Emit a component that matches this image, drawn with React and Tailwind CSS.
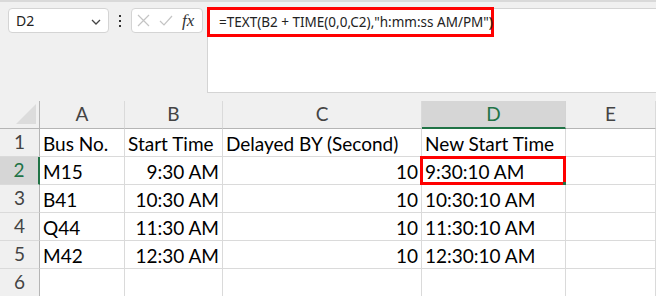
import React from 'react';

// Feuille Excel : barre de formule + grille
const cols = [
  { key: 'A', w: 'w-[85px]' },
  { key: 'B', w: 'w-[98px]' },
  { key: 'C', w: 'w-[199px]' },
  { key: 'D', w: 'w-[144px]' },
  { key: 'E', w: 'flex-1' },
];

const rows = [
  ['Bus No.', 'Start Time', 'Delayed BY (Second)', 'New Start Time', ''],
  ['M15', '9:30 AM', '10', '9:30:10 AM', ''],
  ['B41', '10:30 AM', '10', '10:30:10 AM', ''],
  ['Q44', '11:30 AM', '10', '11:30:10 AM', ''],
  ['M42', '12:30 AM', '10', '12:30:10 AM', ''],
  ['', '', '', '', ''],
];

const cellFont = { fontFamily: 'Lato, "Open Sans", sans-serif' };
const uiFont = { fontFamily: '"Noto Sans", "Open Sans", sans-serif' };

const Cell = ({ value, col, rowIdx }) => {
  const rightAlign = rowIdx > 0 && (col === 'B' || col === 'C');
  const selected = rowIdx === 1 && col === 'D';
  const w = cols.find(c => c.key === col).w;
  return (
    <div
      className={`relative ${w} shrink-0 h-[28px] border-r border-b border-[#dadada] bg-white flex items-center px-[3px] text-[19px] text-black ${rightAlign ? 'justify-end' : ''}`}
      style={cellFont}
    >
      <span className="whitespace-nowrap leading-none pt-[1px]">{value}</span>
      {selected && (
        <>
          <div className="absolute -left-[2px] -top-[1px] -right-[1px] -bottom-[1px] border-[3px] border-[#ff0000] pointer-events-none" />
          <div className="absolute -right-[2px] -bottom-[2px] w-[4px] h-[4px] bg-[#217346]" />
        </>
      )}
    </div>
  );
};

export default function App() {
  return (
    <div className="w-[656px] h-[296px] overflow-hidden bg-[#f0f0f0] relative">
      <div className="h-[2px] bg-[#d9d9d9]" />

      {/* Barre de formule */}
      <div className="flex items-start pt-[6px] pl-[8px]">
        <div className="w-[101px] h-[25px] bg-white border border-[#d4d4d4] rounded-[4px] flex items-center justify-between pl-[7px] pr-[6px]">
          <span className="text-[14px] text-[#222]" style={uiFont}>D2</span>
          <svg width="12" height="8" viewBox="0 0 12 8" className="mt-[2px]">
            <path d="M2 2 L6 6 L10 2" fill="none" stroke="#444" strokeWidth="1.3" />
          </svg>
        </div>
        <div className="w-[22px] h-[25px] flex flex-col items-center justify-center gap-[3px]">
          <div className="w-[2px] h-[2px] bg-[#333]" />
          <div className="w-[2px] h-[2px] bg-[#333]" />
          <div className="w-[2px] h-[2px] bg-[#333]" />
        </div>
        <div className="w-[72px] h-[25px] bg-white border border-[#d4d4d4] rounded-[4px] flex items-center pl-[5px] gap-[9px]">
          <svg width="13" height="13" viewBox="0 0 13 13">
            <path d="M1 1 L12 12 M12 1 L1 12" stroke="#c4c4c4" strokeWidth="1.2" />
          </svg>
          <svg width="14" height="12" viewBox="0 0 14 12">
            <path d="M1 6 L5 10 L13 1" fill="none" stroke="#c4c4c4" strokeWidth="1.2" />
          </svg>
          <span className="text-[17px] italic text-[#333] leading-none" style={{ fontFamily: '"Liberation Serif", serif' }}>fx</span>
        </div>
        <div className="ml-[4px] flex-1 h-[85px] bg-white border border-[#d4d4d4] border-r-0">
          <div className="-mt-[2px] -ml-px w-[287px] h-[30px] border-[3px] border-[#ff0000] flex items-center pl-[9px]">
            <span className="text-[13.5px] text-[#222] whitespace-nowrap" style={uiFont}>
              =TEXT(B2 + TIME(0,0,C2),"h:mm:ss AM/PM")
            </span>
          </div>
        </div>
      </div>

      {/* Grille */}
      <div className="mt-[8px]">
        <div className="flex h-[28px]">
          <div className="w-[40px] shrink-0 border-r border-b border-[#b5b5b5] flex items-end justify-end pr-[3px] pb-[4px]">
            <svg width="20" height="20" viewBox="0 0 20 20">
              <polygon points="20,0 20,20 0,20" fill="#dcdcdc" />
            </svg>
          </div>
          {cols.map(c => (
            <div
              key={c.key}
              className={`${c.w} shrink-0 flex items-center justify-center text-[19px] ${
                c.key === 'D'
                  ? 'bg-[#d6d6d6] text-[#217346] border-b-2 border-b-[#217346] border-r border-r-[#d4d4d4]'
                  : 'text-[#444] border-b border-b-[#b5b5b5] border-r border-r-[#dadada]'
              }`}
              style={cellFont}
            >
              {c.key}
            </div>
          ))}
        </div>
        {rows.map((r, i) => (
          <div key={i} className="flex h-[28px]">
            <div
              className={`w-[40px] shrink-0 h-[28px] border-b border-[#dadada] flex items-center justify-center text-[19px] ${
                i === 1
                  ? 'bg-[#d6d6d6] text-[#217346] border-r-2 border-r-[#217346]'
                  : 'text-[#444] border-r border-r-[#b5b5b5]'
              }`}
              style={cellFont}
            >
              {i + 1}
            </div>
            {cols.map((c, j) => (
              <Cell key={c.key} value={r[j]} col={c.key} rowIdx={i} />
            ))}
          </div>
        ))}
      </div>
    </div>
  );
}
